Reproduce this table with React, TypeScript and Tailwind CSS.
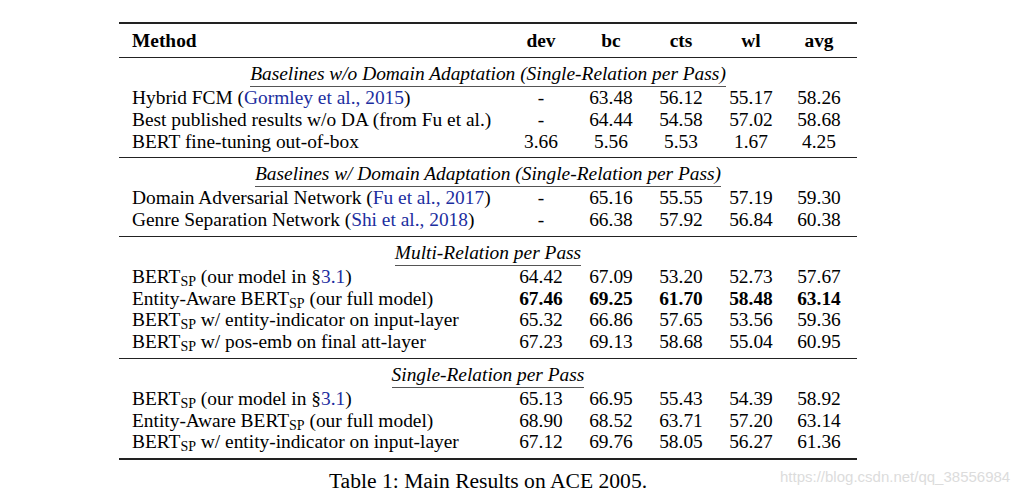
import React from "react";

type Row = {
  method: React.ReactNode;
  vals: string[];
  bold?: boolean;
};

const Cite = ({ children }: { children: React.ReactNode }) => (
  <span className="text-[#1c2ea0]">{children}</span>
);

const Bert = () => (
  <>
    BERT<span className="text-[14px] leading-[0] align-[-3px]">SP</span>
  </>
);

const sections: { title: string; rows: Row[] }[] = [
  {
    title: "Baselines w/o Domain Adaptation (Single-Relation per Pass)",
    rows: [
      {
        method: (
          <>
            Hybrid FCM (<Cite>Gormley et al., 2015</Cite>)
          </>
        ),
        vals: ["-", "63.48", "56.12", "55.17", "58.26"],
      },
      {
        method: "Best published results w/o DA (from Fu et al.)",
        vals: ["-", "64.44", "54.58", "57.02", "58.68"],
      },
      {
        method: "BERT fine-tuning out-of-box",
        vals: ["3.66", "5.56", "5.53", "1.67", "4.25"],
      },
    ],
  },
  {
    title: "Baselines w/ Domain Adaptation (Single-Relation per Pass)",
    rows: [
      {
        method: (
          <>
            Domain Adversarial Network (<Cite>Fu et al., 2017</Cite>)
          </>
        ),
        vals: ["-", "65.16", "55.55", "57.19", "59.30"],
      },
      {
        method: (
          <>
            Genre Separation Network (<Cite>Shi et al., 2018</Cite>)
          </>
        ),
        vals: ["-", "66.38", "57.92", "56.84", "60.38"],
      },
    ],
  },
  {
    title: "Multi-Relation per Pass",
    rows: [
      {
        method: (
          <>
            <Bert /> (our model in §<Cite>3.1</Cite>)
          </>
        ),
        vals: ["64.42", "67.09", "53.20", "52.73", "57.67"],
      },
      {
        method: (
          <>
            Entity-Aware <Bert /> (our full model)
          </>
        ),
        vals: ["67.46", "69.25", "61.70", "58.48", "63.14"],
        bold: true,
      },
      {
        method: (
          <>
            <Bert /> w/ entity-indicator on input-layer
          </>
        ),
        vals: ["65.32", "66.86", "57.65", "53.56", "59.36"],
      },
      {
        method: (
          <>
            <Bert /> w/ pos-emb on final att-layer
          </>
        ),
        vals: ["67.23", "69.13", "58.68", "55.04", "60.95"],
      },
    ],
  },
  {
    title: "Single-Relation per Pass",
    rows: [
      {
        method: (
          <>
            <Bert /> (our model in §<Cite>3.1</Cite>)
          </>
        ),
        vals: ["65.13", "66.95", "55.43", "54.39", "58.92"],
      },
      {
        method: (
          <>
            Entity-Aware <Bert /> (our full model)
          </>
        ),
        vals: ["68.90", "68.52", "63.71", "57.20", "63.14"],
      },
      {
        method: (
          <>
            <Bert /> w/ entity-indicator on input-layer
          </>
        ),
        vals: ["67.12", "69.76", "58.05", "56.27", "61.36"],
      },
    ],
  },
];

const grid = "grid grid-cols-[387px_70px_70px_70px_70px_66px] pr-[5px]";

export default function App() {
  return (
    <div className="relative w-[1032px] h-[493px] bg-white overflow-hidden text-black font-[family-name:Liberation_Serif,serif] text-[19.4px]">
      <div className="ml-[119px] w-[738px] pt-[22px]">
        <div className="border-t-2 border-[#222]" />
        {/* header */}
        <div className={`${grid} h-[33px] items-center font-bold`}>
          <div className="pl-[13px]">Method</div>
          <div className="text-center">dev</div>
          <div className="text-center">bc</div>
          <div className="text-center">cts</div>
          <div className="text-center">wl</div>
          <div className="text-center">avg</div>
        </div>

        {sections.map((s, i) => (
          <div key={i}>
            <div className="border-t border-[#222]" />
            <div className="pt-[6px] pb-[5px]">
              <div className="text-center leading-[20px]">
                <span className="inline-block italic pb-[2px] border-b border-[#555]">
                  {s.title}
                </span>
              </div>
              {s.rows.map((r, j) => (
                <div key={j} className={`${grid} h-[21.75px] leading-[21.75px]`}>
                  <div className="pl-[13px] whitespace-nowrap">{r.method}</div>
                  {r.vals.map((v, k) => (
                    <div key={k} className={`text-center ${r.bold ? "font-bold" : ""}`}>
                      {v}
                    </div>
                  ))}
                </div>
              ))}
            </div>
          </div>
        ))}

        <div className="border-t-2 border-[#222]" />
        <div className="pt-[9px] text-center text-[21.6px] leading-[24px]">
          Table 1: Main Results on ACE 2005.
        </div>
      </div>

      <div className="absolute left-[780px] top-[466px] font-[family-name:Liberation_Sans,sans-serif] text-[15px] text-[#dcdcdc]">
        https://blog.csdn.net/qq_38556984
      </div>
    </div>
  );
}
